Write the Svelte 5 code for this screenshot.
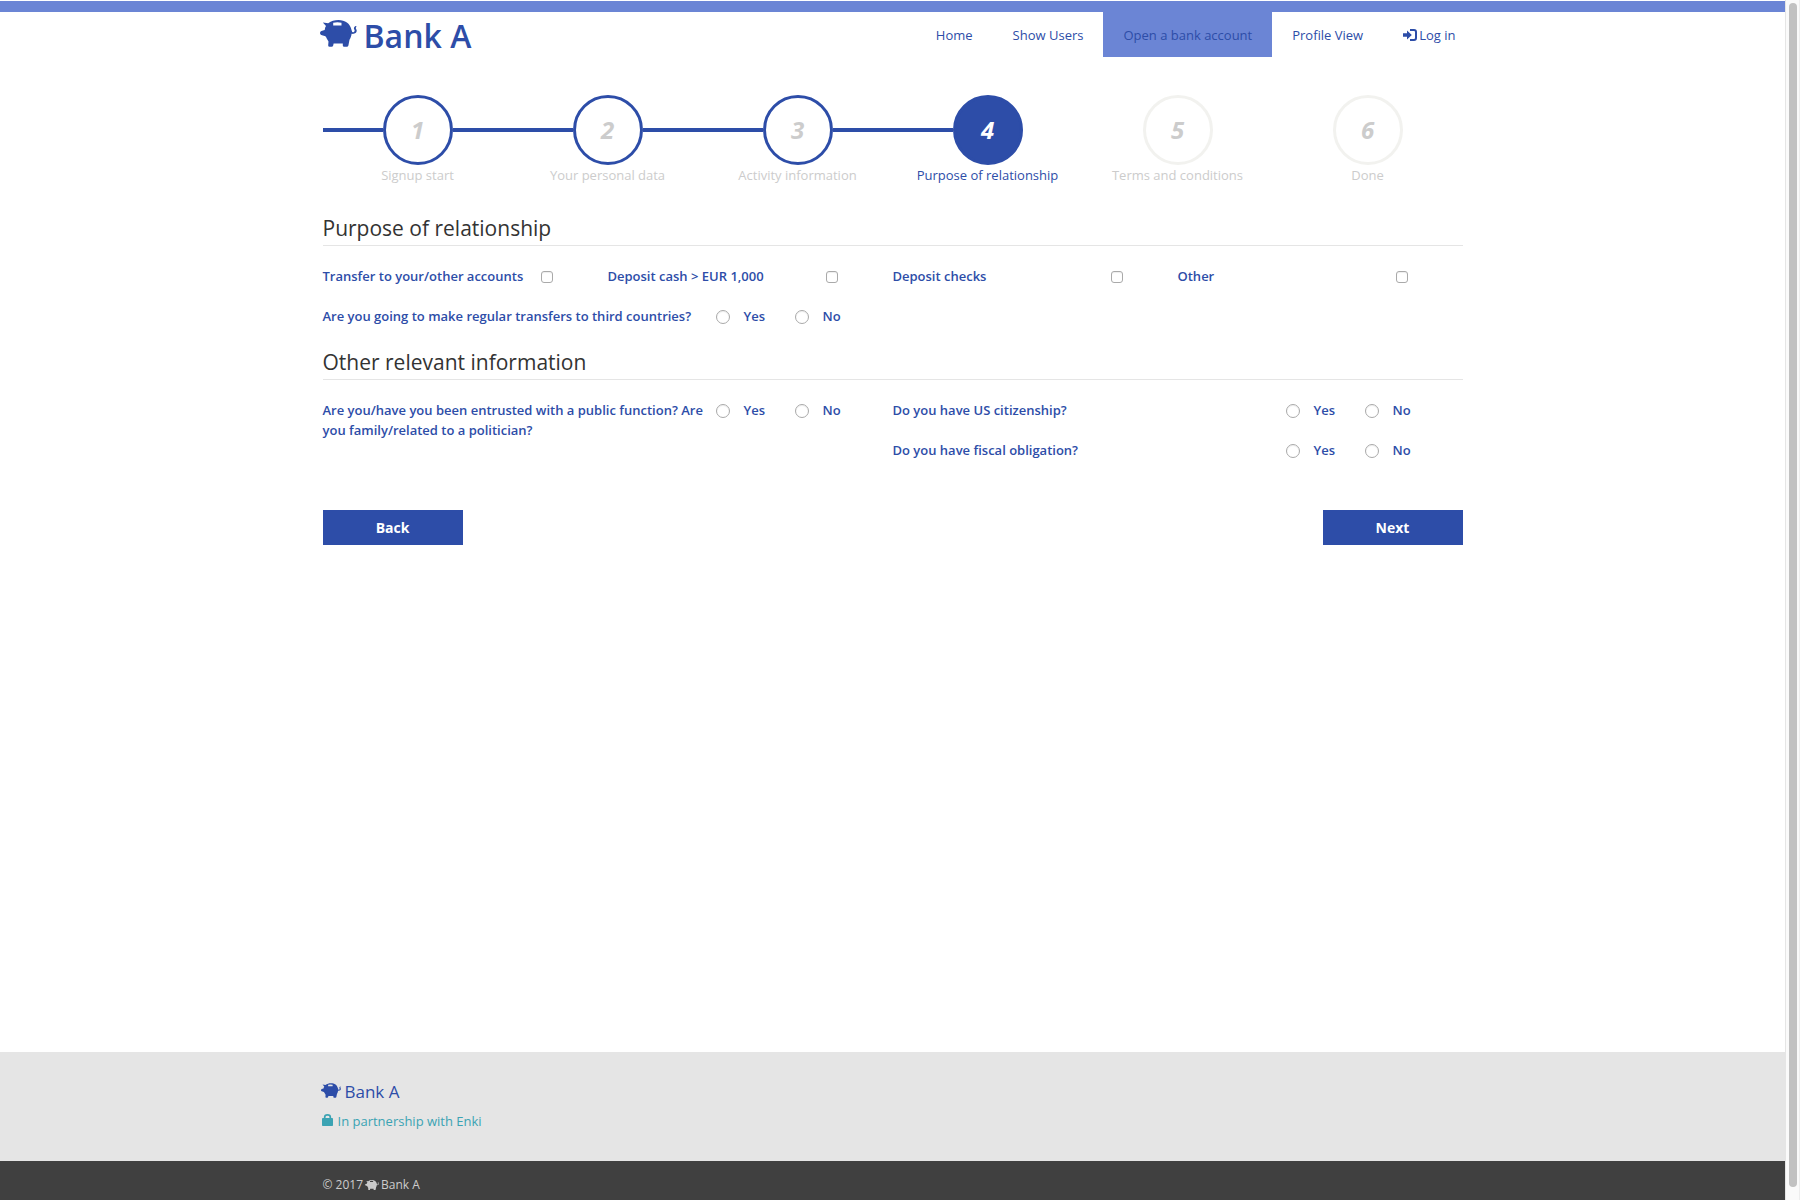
<script>
  const steps = [
    ['Signup start', 'done'],
    ['Your personal data', 'done'],
    ['Activity information', 'done'],
    ['Purpose of relationship', 'current'],
    ['Terms and conditions', 'todo'],
    ['Done', 'todo'],
  ];
  const purposes = ['Transfer to your/other accounts', 'Deposit cash > EUR 1,000', 'Deposit checks', 'Other'];
</script>

{#snippet pig(cls)}
  <svg class="pig {cls}" viewBox="0 0 37 27" fill="currentColor" aria-hidden="true">
    <path fill-rule="evenodd" d="M2.8 2.6L8.2 3.2C11.3 1 14.5 0 18.5 0C25 0 30.2 3.6 31.3 9.3L32.2 12.1C34.2 12.4 35.2 11 34.3 9.6C33.4 8.2 34.2 6.4 35.8 6L36.7 6.8C35.5 7.5 35.6 8.4 36.4 9.5C37.6 12 35.3 14.4 31.6 13.8C31.3 16.3 30.6 18.2 29.5 19.8L28.4 25.4Q28 26.8 26.8 26.8H24.2Q22.8 26.8 22.8 25.4V23.6H13.6L13.2 25.4Q12.9 26.8 11.6 26.8H9.6Q8.1 26.8 8.2 25.3L8.5 21.4C7.2 19.8 6.5 17.6 5.4 16.3L1.3 15.1Q0 14.5 0 12.9Q0 11.3 1.4 10.9L4.7 9.9Q5 7.3 6 6ZM13.2 2.8V5.6H21.5V2.8Q17.4 1.8 13.2 2.8Z" />
  </svg>
{/snippet}

{#snippet choice(name)}
  <div class="choices">
    <label><input type="radio" {name} /><span>Yes</span></label>
    <label><input type="radio" {name} /><span>No</span></label>
  </div>
{/snippet}

<div class="window">
  <div class="page">
    <header>
      <div class="container bar">
        <a class="brand" href="#home">{@render pig('large')}<span>Bank A</span></a>
        <nav>
          <a href="#home">Home</a>
          <a href="#users">Show Users</a>
          <a class="active" href="#open">Open a bank account</a>
          <a href="#profile">Profile View</a>
          <a href="#login">
            <svg class="login" viewBox="0 0 14 12" aria-hidden="true">
              <path d="M0 4.2H4V1.5L8.8 6L4 10.5V7.8H0Z" fill="currentColor" />
              <path d="M7 1H11Q13 1 13 3V9Q13 11 11 11H7" fill="none" stroke="currentColor" stroke-width="2" />
            </svg>Log in</a>
        </nav>
      </div>
    </header>

    <main class="container">
      <ol class="steps">
        {#each steps as [label, state], i}
          <li class={state}>
            <div class="track"><i></i><b>{i + 1}</b><i></i></div>
            <span>{label}</span>
          </li>
        {/each}
      </ol>

      <h2>Purpose of relationship</h2>
      <div class="purposes">
        {#each purposes as p}
          <label><span>{p}</span><input type="checkbox" /></label>
        {/each}
      </div>
      <div class="columns">
        <div class="question"><p>Are you going to make regular transfers to third countries?</p>{@render choice('transfers')}</div>
      </div>

      <h2 class="second">Other relevant information</h2>
      <div class="columns">
        <div class="question">
          <p>Are you/have you been entrusted with a public function? Are you family/related to a politician?</p>
          {@render choice('public')}
        </div>
        <div>
          <div class="question"><p>Do you have US citizenship?</p>{@render choice('us')}</div>
          <div class="question"><p>Do you have fiscal obligation?</p>{@render choice('fiscal')}</div>
        </div>
      </div>

      <div class="actions"><button>Back</button><button>Next</button></div>
    </main>

    <footer>
      <div class="container">
        <div class="foot-brand">{@render pig('medium')}<span>Bank A</span></div>
        <div class="partner">
          <svg class="lock" viewBox="0 0 11 12" aria-hidden="true">
            <path d="M2.7 5V3Q2.7 .9 5.5 .9Q8.3 .9 8.3 3V5" fill="none" stroke="currentColor" stroke-width="1.7" />
            <rect y="4" width="11" height="8" rx=".8" fill="currentColor" />
          </svg><span>In partnership with Enki</span>
        </div>
      </div>
    </footer>
    <div class="copyright">
      <div class="container"><span>© 2017</span>{@render pig('small')}<span>Bank A</span></div>
    </div>
  </div>
  <div class="scrollbar"><div></div></div>
</div>

<style>
  :global(body) { overflow: hidden; background: #fff; }
  .window { display: flex; height: 1200px; font: 13px/20px 'Open Sans', sans-serif; color: #2d4da8; }
  .window * { box-sizing: border-box; }
  .page { width: 1785px; display: flex; flex-direction: column; padding-top: 1px; }
  .container { width: 1140px; margin: 0 auto; }
  a { color: inherit; text-decoration: none; }
  header { border-top: 11px solid #6b85d5; height: 94px; flex: none; }
  .bar { display: flex; justify-content: space-between; }
  .brand { display: flex; margin-left: -3px; font-size: 32px; line-height: 48px; font-weight: 600; }
  .pig { display: block; flex: none; }
  .large { width: 37px; height: 27px; margin: 8px 7px 0 0; }
  nav { display: flex; margin-right: -13px; }
  nav a { height: 45px; padding: 13px 20px 0; white-space: nowrap; }
  nav .active { background: #6b85d5; }
  .login { width: 14px; height: 12px; margin-right: 2px; vertical-align: -1px; }

  main { flex: 1; }
  .steps { display: flex; list-style: none; margin: 0; padding: 0; }
  .steps li { width: 190px; text-align: center; color: #ccc; }
  .track { display: flex; align-items: center; }
  .track i { flex: 1; height: 4px; }
  .track b { width: 70px; height: 70px; border: 3px solid #f2f2ef; border-radius: 50%; font: italic 700 24px/63px 'Open Sans', sans-serif; }
  .steps span { display: block; white-space: nowrap; }
  .done i, .current i:first-child { background: #2d4da8; }
  .done b { border-color: #2d4da8; }
  .steps .current { color: #2d4da8; }
  .current b { background: #2d4da8; border-color: #2d4da8; color: #fff; }

  h2 { margin: 28px 0 20px; height: 33px; border-bottom: 1px solid #e5e5e5; font-size: 21px; line-height: 30px; font-weight: 400; color: #333; }
  .second { margin-top: 1px; }
  .purposes { display: flex; font-weight: 600; }
  .purposes label { width: 285px; height: 40px; display: flex; }
  .purposes span { width: 218px; }
  input { appearance: none; flex: none; border: 1px solid #aaa; background: #fff; margin: 0; box-shadow: inset 0 1px 1px #eee; }
  input[type='checkbox'] { width: 12px; height: 12px; border-radius: 3px; margin-top: 5px; }
  input[type='radio'] { width: 14px; height: 14px; border-radius: 50%; margin: 4px 14px 0 0; }
  .columns { display: grid; grid-template-columns: 1fr 1fr; font-weight: 600; }
  .question { display: flex; min-height: 40px; }
  .question p { width: 393px; margin: 0; padding-right: 10px; }
  .choices { display: flex; }
  .choices label { display: flex; width: 79px; }
  .actions { display: flex; justify-content: space-between; margin-top: 30px; }
  button { width: 140px; height: 35px; border: 0; padding: 0; background: #2d4da8; color: #fff; font: 700 14px/35px 'Open Sans', sans-serif; }

  footer { height: 109px; background: #e5e5e5; padding-top: 25px; }
  .foot-brand { display: flex; font-size: 17px; line-height: 30px; }
  .medium { width: 20px; height: 15px; margin: 6px 4px 0 -2px; }
  .partner { display: flex; color: #3ba3b3; line-height: 28px; }
  .lock { width: 11px; height: 12px; margin: 7px 5px 0 -1px; }
  .copyright { height: 39px; background: #404040; color: #ccc; font-size: 12px; line-height: 20px; padding-top: 14px; }
  .copyright .container { display: flex; }
  .small { width: 14px; height: 10px; margin: 5px 2px 0 2px; }
  .scrollbar { width: 15px; background: #fafafa; border-left: 1px solid #e5e5e5; border-right: 1px solid #ededed; padding: 3px 2px 0 3px; }
  .scrollbar div { width: 8px; height: 1184px; border-radius: 4px; background: #c1c1c1; }
</style>
